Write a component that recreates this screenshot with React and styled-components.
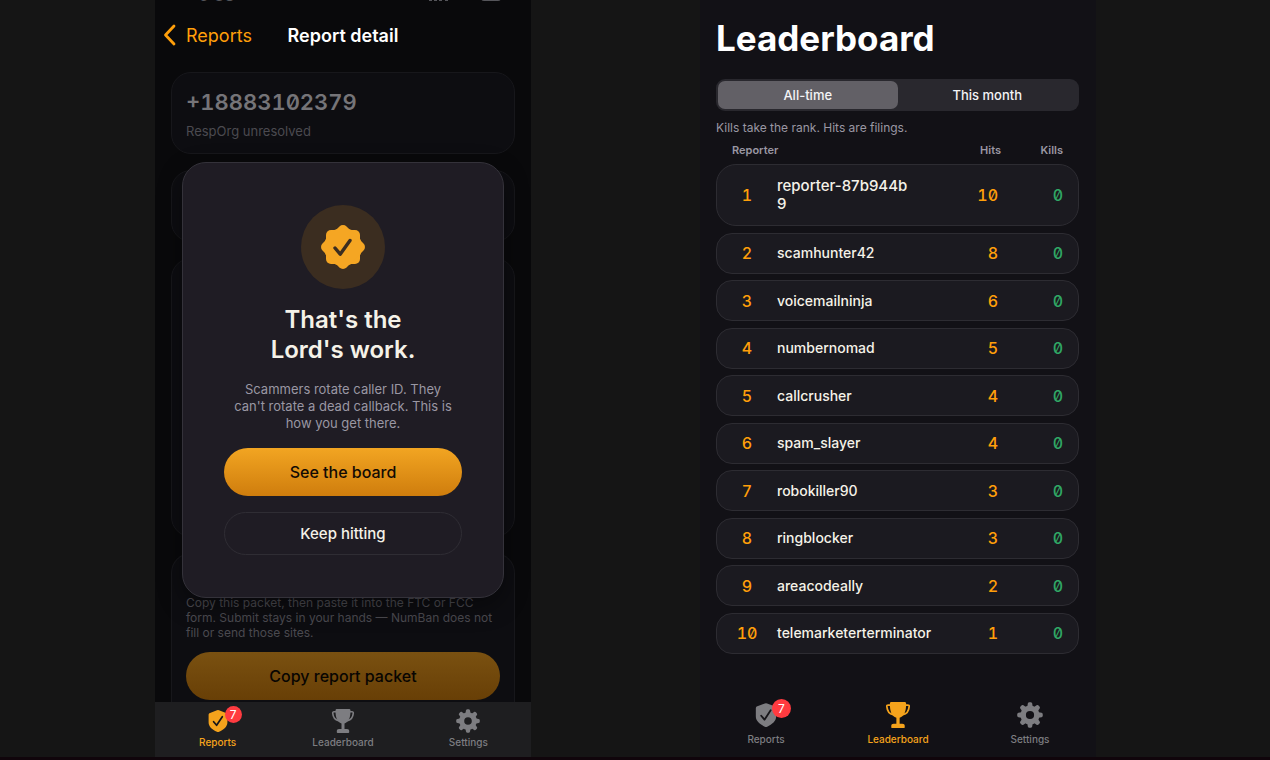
import React from "react";
import { useState } from "react";
import styled, { createGlobalStyle } from "styled-components";

const reporters = [
  { rank: 1, name: "reporter-87b944b9", hits: 10, kills: 0 },
  { rank: 2, name: "scamhunter42", hits: 8, kills: 0 },
  { rank: 3, name: "voicemailninja", hits: 6, kills: 0 },
  { rank: 4, name: "numbernomad", hits: 5, kills: 0 },
  { rank: 5, name: "callcrusher", hits: 4, kills: 0 },
  { rank: 6, name: "spam_slayer", hits: 4, kills: 0 },
  { rank: 7, name: "robokiller90", hits: 3, kills: 0 },
  { rank: 8, name: "ringblocker", hits: 3, kills: 0 },
  { rank: 9, name: "areacodeally", hits: 2, kills: 0 },
  { rank: 10, name: "telemarketerterminator", hits: 1, kills: 0 },
];

const ShieldIcon = ({ size }) => (
  <svg width={size} height={size} viewBox="0 0 24 24" aria-hidden="true">
    <path
      fill="currentColor"
      d="M11 1.3a2.4 2.4 0 0 1 2 0l7 2.7c.9.4 1.4 1 1.4 2v7.2c0 4.6-3.7 7.3-8.3 9.6a2.4 2.4 0 0 1-2.2 0C6.300 20.500 2.600 17.800 2.600 13.200V6c0-1 .5-1.600 1.400-2z"
    />
    <path
      d="M7.600 12.700l3 3.600 5.700-8.600"
      fill="none"
      stroke="#17161a"
      strokeWidth="1.700"
      strokeLinecap="round"
      strokeLinejoin="round"
    />
  </svg>
);

const TrophyIcon = ({ size }) => (
  <svg width={size} height={size} viewBox="0 0 24 24" aria-hidden="true">
    <path
      fill="currentColor"
      d="M6 0h12c1 0 1.500.5 1.500 1.500 0 7-1.600 11.300-6 13.100V20H16c1.500 0 2.200.7 2.200 2v1.200c0 .5-.3.8-.8.8H6.600c-.5 0-.8-.3-.8-.8V22c0-1.300.7-2 2.200-2h2.500v-5.400c-4.400-1.800-6-6.100-6-13.100C4.500.5 5 0 6 0z"
    />
    <path
      d="M5 2.800H3C2 2.800 1.600 3.300 1.700 4.200c.4 4.200 2.300 6.800 5.800 7.500M19 2.800h2c1 0 1.400.5 1.300 1.400-.4 4.200-2.300 6.800-5.800 7.500"
      fill="none"
      stroke="currentColor"
      strokeWidth="1.600"
      strokeLinecap="round"
    />
  </svg>
);

const GearIcon = ({ size }) => (
  <svg width={size} height={size} viewBox="0 0 24 24" aria-hidden="true">
    <circle cx="12" cy="12" r="6.300" fill="none" stroke="currentColor" strokeWidth="5" />
    {[0, 45, 90, 135, 180, 225, 270, 315].map((angle) => (
      <path
        key={angle}
        d="M9.300 5l.7-3.600C10.200.5 10.700.2 12 .2s1.800.3 2 1.200l.7 3.600z"
        fill="currentColor"
        transform={`rotate(${angle} 12 12)`}
      />
    ))}
  </svg>
);

const SealIcon = () => (
  <svg width="44" height="44" viewBox="0 0 44 44" aria-hidden="true">
    <circle cx="22" cy="22" r="19" fill="#f5a623" />
    <rect x="5" y="5" width="34" height="34" rx="5" fill="#f5a623" />
    <rect x="5" y="5" width="34" height="34" rx="5" fill="#f5a623" transform="rotate(45 22 22)" />
    <path
      d="M14 23l5.200 6.200L29 15.500"
      fill="none"
      stroke="#3b2d20"
      strokeWidth="3.400"
      strokeLinecap="round"
      strokeLinejoin="round"
    />
  </svg>
);

const tabs = [
  { label: "Reports", Icon: ShieldIcon, badge: 7 },
  { label: "Leaderboard", Icon: TrophyIcon },
  { label: "Settings", Icon: GearIcon },
];

const TabBar = ({ active, large }) => (
  <TabNav $large={large}>
    {tabs.map(({ label, Icon, badge }) => (
      <TabButton key={label} type="button" $active={label === active} $large={large}>
        <IconBox>
          <Icon size={large ? 26 : 24} />
          {badge && <Badge $large={large}>{badge}</Badge>}
        </IconBox>
        {label}
      </TabButton>
    ))}
  </TabNav>
);

const ReportDetail = () => (
  <Phone>
    <StatusBar>
      <span>9:38</span>
      <StatusIcons>
        <svg width="20" height="10" viewBox="0 0 20 10" aria-hidden="true">
          <path d="M0 7h3v3H0zM5 5h3v5H5zM10 3h3v7h-3zM16 0h3v10h-3z" fill="#55555a" />
        </svg>
        <svg width="20" height="10" viewBox="0 0 20 10" aria-hidden="true">
          <rect width="20" height="10" rx="3" fill="#55555a" />
        </svg>
      </StatusIcons>
    </StatusBar>
    <NavHeader>
      <BackLink href="#reports">
        <svg width="13" height="22" viewBox="0 0 13 22" aria-hidden="true">
          <path
            d="M11 2L2.500 11l8.500 9"
            fill="none"
            stroke="currentColor"
            strokeWidth="2.800"
            strokeLinecap="round"
            strokeLinejoin="round"
          />
        </svg>
        Reports
      </BackLink>
      <NavTitle>Report detail</NavTitle>
    </NavHeader>
    <Content>
      <Card>
        <PhoneNumber>+18883102379</PhoneNumber>
        <Muted>RespOrg unresolved</Muted>
      </Card>
      <Card $height={72} />
      <Card $height={279} />
      <PacketCard>
        <PacketText>
          Copy this packet, then paste it into the FTC or FCC form. Submit stays
          in your hands — NumBan does not fill or send those sites.
        </PacketText>
        <PrimaryButton type="button" $dim>
          Copy report packet
        </PrimaryButton>
      </PacketCard>
    </Content>
    <TabBar active="Reports" />
    <Overlay>
      <Modal role="dialog" aria-labelledby="modal-title">
        <SealCircle>
          <SealIcon />
        </SealCircle>
        <ModalTitle id="modal-title">
          That's the
          <br />
          Lord's work.
        </ModalTitle>
        <ModalText>
          Scammers rotate caller ID. They
          <br />
          can't rotate a dead callback. This is
          <br />
          how you get there.
        </ModalText>
        <PrimaryButton type="button">See the board</PrimaryButton>
        <SecondaryButton type="button">Keep hitting</SecondaryButton>
      </Modal>
    </Overlay>
  </Phone>
);

const Leaderboard = () => {
  const [period, setPeriod] = useState("All-time");

  return (
    <Phone $light>
      <Board>
        <BoardTitle>Leaderboard</BoardTitle>
        <Segments>
          {["All-time", "This month"].map((item) => (
            <Segment
              key={item}
              type="button"
              aria-pressed={item === period}
              $active={item === period}
              onClick={() => setPeriod(item)}
            >
              {item}
            </Segment>
          ))}
        </Segments>
        <Hint>Kills take the rank. Hits are filings.</Hint>
        <Table>
          <thead>
            <HeadRow>
              <th>Reporter</th>
              <th>Hits</th>
              <th>Kills</th>
            </HeadRow>
          </thead>
          <TableBody>
            {reporters.map((item) => (
              <Row key={item.rank}>
                <Num $center>{item.rank}</Num>
                <Name>{item.name}</Name>
                <Num>{item.hits}</Num>
                <Num $green>{item.kills}</Num>
              </Row>
            ))}
          </TableBody>
        </Table>
      </Board>
      <TabBar active="Leaderboard" large />
    </Phone>
  );
};

const App = () => {
  return (
    <>
      <GlobalStyle />
      <Page>
        <ReportDetail />
        <Leaderboard />
      </Page>
    </>
  );
};

export default App;

const GlobalStyle = createGlobalStyle`
  * {
    box-sizing: border-box;
  }
  body {
    margin: 0;
    background: #151515;
    font-family: Inter, "Liberation Sans", sans-serif;
  }
  h1, h2, p {
    margin: 0;
  }
  button {
    font-family: inherit;
    cursor: pointer;
  }
`;

const Page = styled.main`
  display: grid;
  grid-template-columns: 155fr 376fr 169fr 396fr 174fr;
  min-height: 100vh;
  border-bottom: 3px solid #10050b;
`;

const Phone = styled.section`
  position: relative;
  grid-column: ${({ $light }) => ($light ? 4 : 2)};
  display: flex;
  flex-direction: column;
  min-width: 0;
  background: ${({ $light }) => ($light ? "#121116" : "#09090b")};
`;

const StatusBar = styled.div`
  display: flex;
  justify-content: space-between;
  align-items: flex-end;
  height: 1px;
  padding: 0 30px 0 44px;
  overflow: hidden;
  color: #55555a;
  font-size: 16px;
  font-weight: 600;
  line-height: 12px;
`;

const StatusIcons = styled.div`
  display: flex;
  gap: 32px;
`;

const NavHeader = styled.header`
  display: grid;
  grid-template-columns: 1fr auto 1fr;
  align-items: center;
  height: 68px;
  padding: 0 8px;
`;

const BackLink = styled.a`
  display: flex;
  align-items: center;
  gap: 10px;
  color: #ff9f0a;
  font-size: 18px;
  text-decoration: none;
`;

const NavTitle = styled.h1`
  color: #fff;
  font-size: 18px;
  font-weight: 600;
`;

const Content = styled.div`
  display: flex;
  flex: 1;
  flex-direction: column;
  gap: 16px;
  padding: 3px 16px 0;
`;

const Card = styled.div`
  min-height: ${({ $height }) => $height || 82}px;
  padding: 15px 14px 13px;
  border: 1px solid #17171b;
  border-radius: 20px;
  background: #0d0d11;
`;

const PacketCard = styled(Card)`
  display: flex;
  flex: 1;
  flex-direction: column;
  justify-content: flex-end;
  gap: 12px;
  padding-bottom: 2px;
  border-bottom: 0;
  border-radius: 20px 20px 0 0;
`;

const PhoneNumber = styled.p`
  color: #757478;
  font-size: 22px;
  font-weight: 600;
  font-feature-settings: "tnum", "zero";
  line-height: 28px;
`;

const Muted = styled.p`
  margin-top: 6px;
  color: #4b4a50;
  font-size: 13px;
  line-height: 18px;
`;

const PacketText = styled.p`
  color: #4b4a50;
  font-size: 12px;
  line-height: 15px;
`;

const PrimaryButton = styled.button`
  width: 100%;
  height: 48px;
  border: 0;
  border-radius: 24px;
  background: ${({ $dim }) =>
    $dim
      ? "linear-gradient(#7a5111, #683f06)"
      : "linear-gradient(#f2a522, #cf7d0d)"};
  color: ${({ $dim }) => ($dim ? "#080502" : "#120b04")};
  font-size: 16px;
  font-weight: 500;
`;

const SecondaryButton = styled.button`
  width: 100%;
  height: 43px;
  margin-top: 16px;
  border: 1px solid #2f2d34;
  border-radius: 22px;
  background: transparent;
  color: #f5f2e8;
  font-size: 15px;
  font-weight: 500;
`;

const Overlay = styled.div`
  position: absolute;
  inset: 0;
  display: flex;
  align-items: center;
  justify-content: center;
  padding-top: 3px;
  pointer-events: none;
`;

const Modal = styled.div`
  display: flex;
  flex-direction: column;
  align-items: center;
  width: 86%;
  max-width: 322px;
  padding: 42px 41px;
  border: 1px solid #34323a;
  border-radius: 24px;
  background: #1f1c24;
  box-shadow: 0 8px 24px rgba(0, 0, 0, 0.4);
  text-align: center;
  pointer-events: auto;
`;

const SealCircle = styled.div`
  display: flex;
  align-items: center;
  justify-content: center;
  width: 84px;
  height: 84px;
  border-radius: 50%;
  background: #3b2d20;
`;

const ModalTitle = styled.h2`
  margin-top: 16px;
  color: #f5f2e8;
  font-size: 24px;
  font-weight: 600;
  line-height: 30px;
`;

const ModalText = styled.p`
  margin: 16px 0;
  color: #9a97a3;
  font-size: 13px;
  line-height: 17px;
`;

const Board = styled.div`
  display: flex;
  flex: 1;
  flex-direction: column;
  padding: 16px 17px 0 16px;
`;

const BoardTitle = styled.h1`
  color: #fff;
  font-size: 35px;
  font-weight: 700;
  line-height: 44px;
`;

const Segments = styled.div`
  display: grid;
  grid-template-columns: 1fr 1fr;
  height: 32px;
  margin-top: 19px;
  padding: 2px;
  border-radius: 9px;
  background: #29282e;
`;

const Segment = styled.button`
  border: 0;
  border-radius: 7px;
  background: ${({ $active }) => ($active ? "#626066" : "transparent")};
  color: #f4f4f6;
  font-size: 13px;
  font-weight: 500;
`;

const Hint = styled.p`
  margin-top: 9px;
  color: #9a97a3;
  font-size: 12px;
  line-height: 16px;
`;

const Table = styled.table`
  display: flex;
  flex: 1;
  flex-direction: column;
  padding-bottom: 38px;
`;

const HeadRow = styled.tr`
  display: grid;
  grid-template-columns: 1fr 62px 62px;
  padding: 6px 16px;
  color: #9a97a3;
  font-size: 11px;
  line-height: 16px;

  th {
    padding: 0;
    font-weight: 600;
    text-align: right;
  }
  th:first-child {
    text-align: left;
  }
`;

const TableBody = styled.tbody`
  display: flex;
  flex: 1;
  flex-direction: column;
  justify-content: space-between;
`;

const Row = styled.tr`
  display: grid;
  grid-template-columns: 30px minmax(0, 150px) 1fr 65px;
  align-items: center;
  min-height: 41px;
  padding: 0 15px;
  border: 1px solid #2d2c32;
  border-radius: 16px;
  background: #1b1a20;

  &:first-child {
    min-height: 62px;
    border-radius: 20px;
  }
`;

const Num = styled.td`
  padding: 0;
  color: ${({ $green }) => ($green ? "#30a865" : "#ff9f0a")};
  font-size: 16px;
  font-weight: 500;
  font-feature-settings: "tnum", "zero";
  text-align: ${({ $center }) => ($center ? "center" : "right")};
`;

const Name = styled.td`
  padding: 0 0 0 15px;
  color: #f5f2e8;
  font-size: 14px;
  font-weight: 500;
  line-height: 18px;
  white-space: nowrap;

  ${Row}:first-child & {
    font-size: 15px;
    white-space: normal;
    word-break: break-all;
  }
`;

const TabNav = styled.nav`
  display: grid;
  grid-template-columns: repeat(3, 1fr);
  align-items: start;
  height: ${({ $large }) => ($large ? 65 : 55)}px;
  padding-top: ${({ $large }) => ($large ? 10 : 7)}px;
  background: ${({ $large }) => ($large ? "transparent" : "#1e1e20")};
`;

const TabButton = styled.button`
  display: flex;
  flex-direction: column;
  align-items: center;
  gap: ${({ $large }) => ($large ? 5 : 3)}px;
  padding: 0;
  border: 0;
  background: none;
  color: ${({ $active }) => ($active ? "#f5a31c" : "#7d7d81")};
  font-size: 10px;
  font-weight: 500;
  line-height: 12px;
`;

const IconBox = styled.span`
  position: relative;
  display: flex;
`;

const Badge = styled.span`
  position: absolute;
  top: -3px;
  left: 19px;
  width: ${({ $large }) => ($large ? 19 : 17)}px;
  border-radius: 10px;
  background: #ff3b40;
  color: #fff;
  font-size: 12px;
  font-weight: 400;
  line-height: ${({ $large }) => ($large ? 19 : 17)}px;
  text-align: center;
`;
